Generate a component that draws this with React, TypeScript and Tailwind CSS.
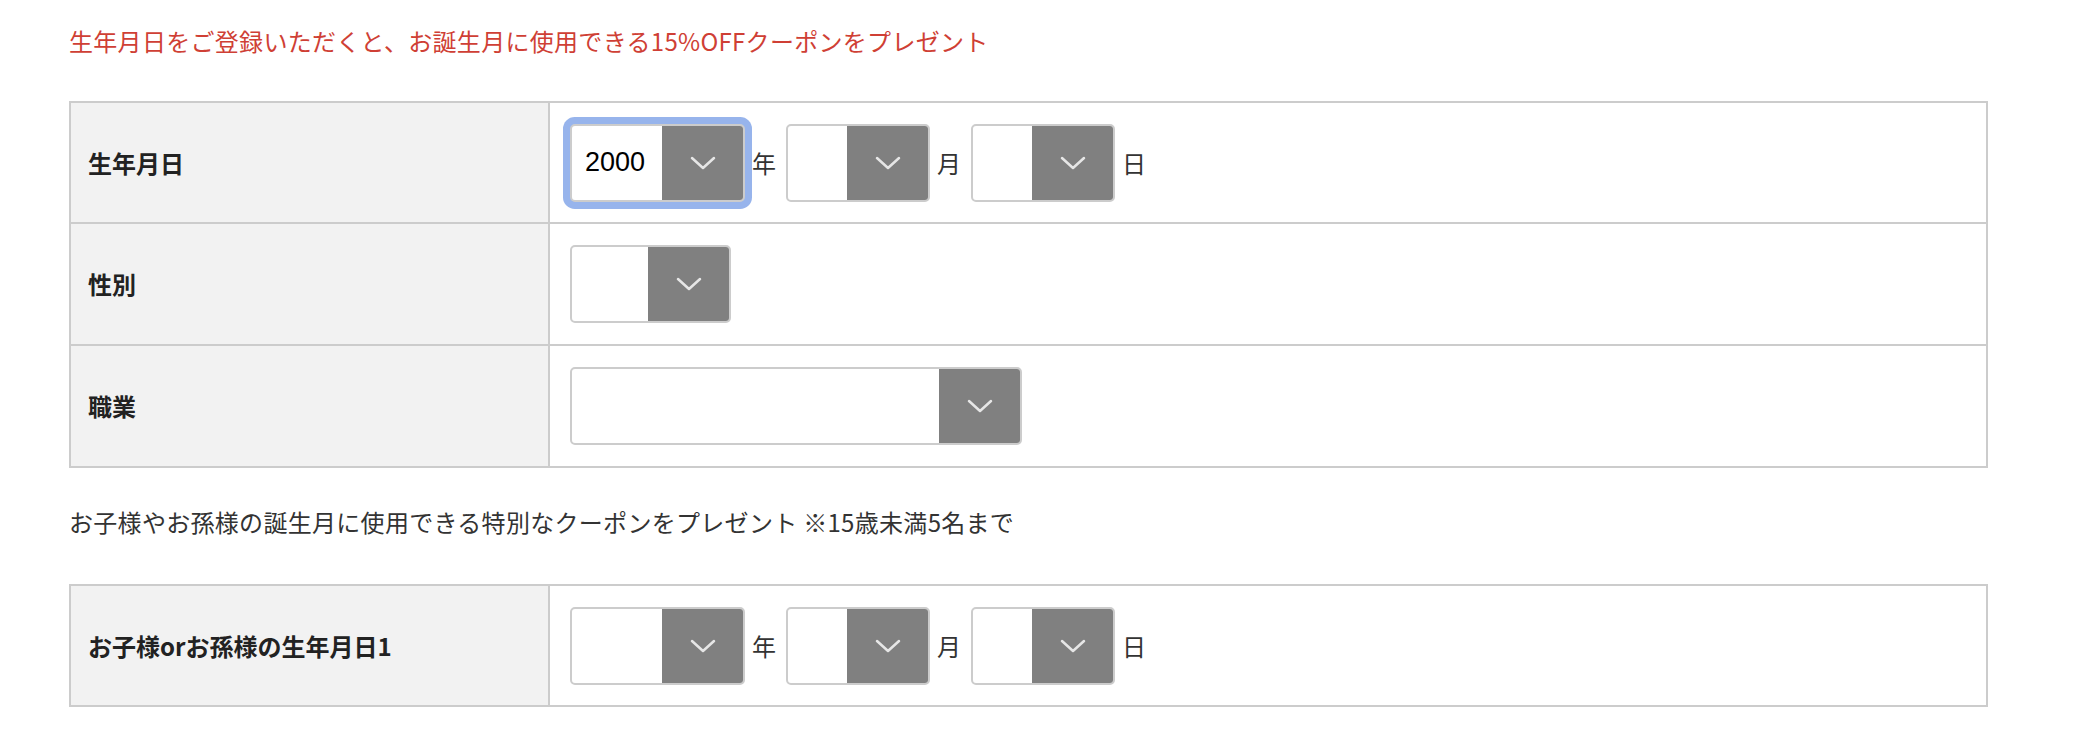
import type { ReactNode } from "react";

const jp = { fontFamily: '"Noto Sans CJK JP", "Noto Sans", sans-serif' };

function Chevron() {
  return (
    <svg width="26" height="14" viewBox="0 0 26 14" fill="none">
      <polyline points="2,2 13,12 24,2" stroke="#e6e6e6" strokeWidth="2.5" strokeLinecap="round" strokeLinejoin="round" />
    </svg>
  );
}

interface SelectBoxProps {
  whiteClass: string;
  value?: string;
  focused?: boolean;
}

function SelectBox({ whiteClass, value, focused }: SelectBoxProps) {
  return (
    <div
      className={
        "flex h-[78px] overflow-hidden rounded-[5px] border-2 border-[#cccccc] bg-white " +
        (focused ? "shadow-[0_0_0_7px_#97b4ec]" : "")
      }
    >
      <div
        className={"flex items-center pl-[13px] text-[27px] text-black " + whiteClass}
        style={{ fontFamily: '"Liberation Sans", Arial, sans-serif' }}
      >
        {value}
      </div>
      <div className="flex w-[81px] items-center justify-center bg-[#808080]">
        <Chevron />
      </div>
    </div>
  );
}

function Unit({ children }: { children: ReactNode }) {
  return <span className="ml-[7px] mr-[10px] text-[24px] text-[#333333]">{children}</span>;
}

function DateSelects({ year }: { year?: string }) {
  return (
    <>
      <SelectBox whiteClass="w-[90px]" value={year} focused={!!year} />
      <Unit>年</Unit>
      <SelectBox whiteClass="w-[59px]" />
      <Unit>月</Unit>
      <SelectBox whiteClass="w-[59px]" />
      <Unit>日</Unit>
    </>
  );
}

function Row({ label, first, children }: { label: string; first?: boolean; children: ReactNode }) {
  return (
    <div className={"flex " + (first ? "h-[119px]" : "h-[122px] border-t-2 border-[#cccccc]")}>
      <div className="flex w-[479px] items-center border-r-2 border-[#cccccc] bg-[#f2f2f2] pl-[17px] text-[24px] font-bold text-[#222222]">
        {label}
      </div>
      <div className="flex flex-1 items-center bg-white pl-[20px]">{children}</div>
    </div>
  );
}

export default function App() {
  return (
    <div className="min-h-[730px] w-[2084px] bg-white pl-[69px]" style={jp}>
      <p className="pt-[23px] text-[24px] leading-[36px] tracking-[0.3px] text-[#cf3f35]">
        生年月日をご登録いただくと、お誕生月に使用できる15%OFFクーポンをプレゼント
      </p>

      <div className="mt-[42px] w-[1919px] border-2 border-[#cccccc]">
        <Row label="生年月日" first>
          <DateSelects year="2000" />
        </Row>
        <Row label="性別">
          <SelectBox whiteClass="w-[76px]" />
        </Row>
        <Row label="職業">
          <SelectBox whiteClass="w-[367px]" />
        </Row>
      </div>

      <p className="mt-[36px] text-[24px] leading-[36px] tracking-[0.3px] text-[#333333]">
        お子様やお孫様の誕生月に使用できる特別なクーポンをプレゼント ※15歳未満5名まで
      </p>

      <div className="mt-[44px] w-[1919px] border-2 border-[#cccccc]">
        <Row label="お子様orお孫様の生年月日1" first>
          <DateSelects />
        </Row>
      </div>
    </div>
  );
}
